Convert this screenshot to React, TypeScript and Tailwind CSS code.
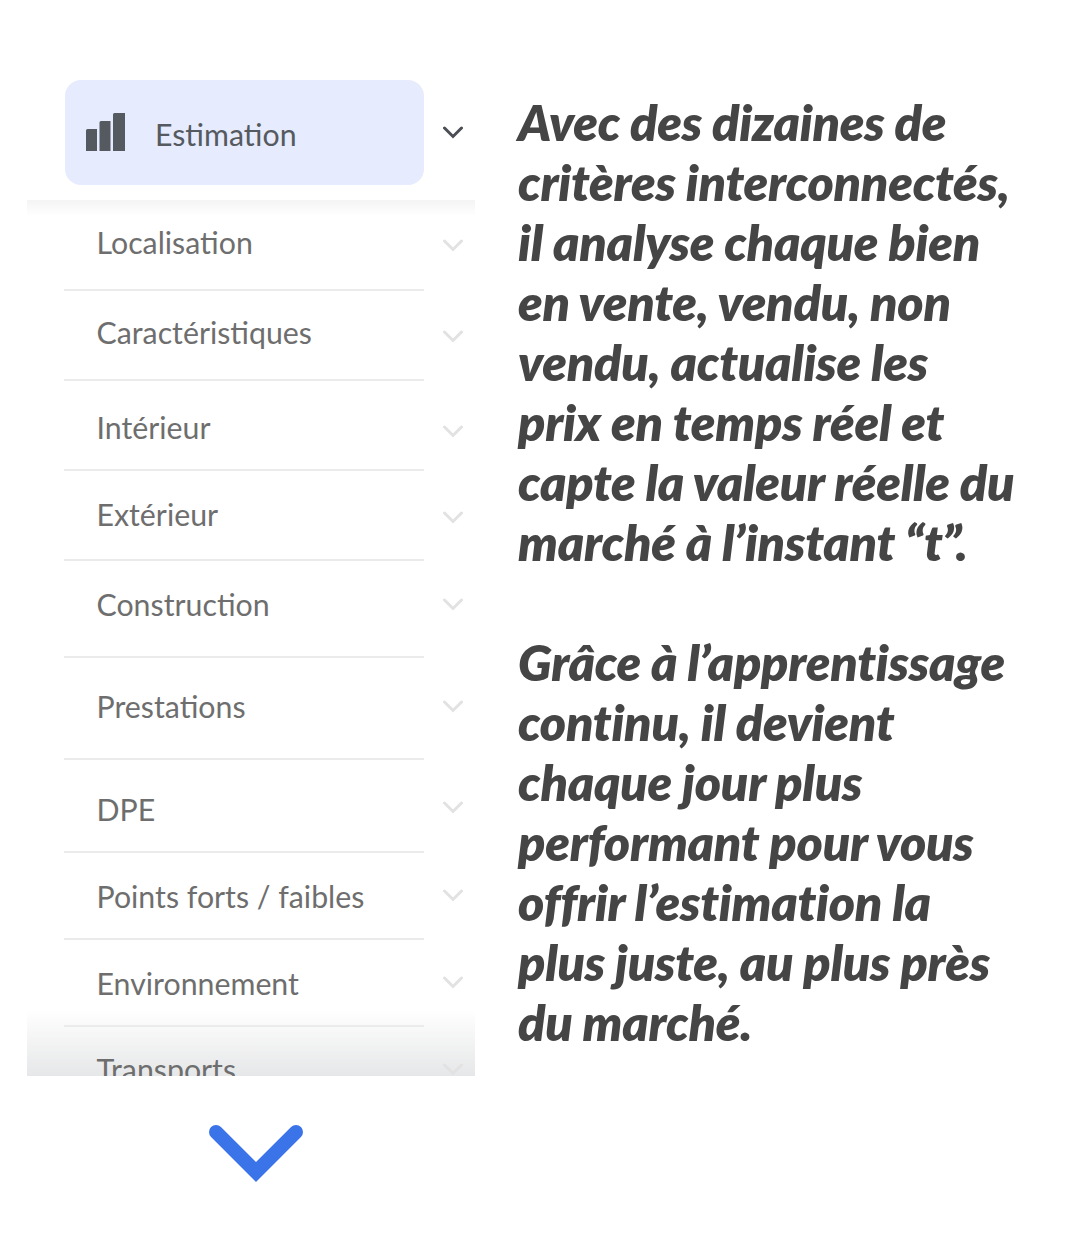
const rows = [
  { label: "Localisation", row: "h-[90px]", text: "pb-1.5", chevron: "pt-0" },
  { label: "Caractéristiques", row: "h-[90px]", text: "pb-1.5", chevron: "pt-0.5" },
  { label: "Intérieur", row: "h-[90px]", text: "pt-1", chevron: "pt-3" },
  { label: "Extérieur", row: "h-[90px]", text: "pb-0.5", chevron: "pt-1" },
  { label: "Construction", row: "h-[97px]", text: "pb-2", chevron: "pb-2" },
  { label: "Prestations", row: "h-[102px]", text: "pb-1", chevron: "pb-1" },
  { label: "DPE", row: "h-[93px]", text: "pt-2", chevron: "pt-1" },
  { label: "Points forts / faibles", row: "h-[87px]", text: "pt-0.5", chevron: "pt-0" },
  { label: "Environnement", row: "h-[87px]", text: "pt-0.5", chevron: "pt-0" },
  { label: "Transports", row: "h-[87px]", text: "pt-0", chevron: "pt-0" },
];

function Chevron({ className }: { className: string }) {
  return (
    <svg width="20" height="13" viewBox="0 0 20 13" fill="none" className={className}>
      <path d="M1.500 2 10 10.500 18.500 2" stroke="currentColor" strokeWidth="3" strokeLinecap="round" strokeLinejoin="miter" />
    </svg>
  );
}

export default function App() {
  return (
    <div className="flex h-[1247px] w-[1083px] overflow-hidden bg-white font-['Lato',sans-serif]">
      {/* Left: accordion of criteria */}
      <div className="w-[518px] shrink-0 pl-[27px] pt-[80px]">
        <div className="flex h-[105px] items-center pl-[38px]">
          <div className="flex h-full w-[359px] items-center rounded-2xl bg-[#e6ebfd] pl-[21px]">
            <svg width="39" height="38" viewBox="0 0 39 38" fill="#555a60" className="mb-[1px]">
              <path d="M0 17.500A1.500 1.500 0 0 1 1.500 16H11v22H0zM13.500 9.500A1.500 1.500 0 0 1 15 8h9.500v30h-11zM27 1.500A1.500 1.500 0 0 1 28.500 0H39v38H27z" />
            </svg>
            <span className="ml-[30px] pt-[3px] text-[30.3px] leading-none text-[#555a60]">Estimation</span>
          </div>
          <Chevron className="ml-[19px] text-[#4b4f55]" />
        </div>

        <div className="relative mt-[15px] h-[876px] w-[448px] overflow-hidden">
          <div className="absolute inset-x-0 top-0 h-[16px] bg-gradient-to-b from-[#f4f4f4] to-white" />
          <div className="absolute inset-x-0 bottom-0 h-[66px] bg-gradient-to-b from-white to-[#e6e7e8]" />
          <div className="relative flex w-[397px] flex-col pl-[37px] pt-[1px]">
            {rows.map((r) => (
              <div key={r.label} className={`flex shrink-0 items-center border-b-2 border-[#ebebeb] ${r.row}`}>
                <span className={`w-[360px] shrink-0 pl-[32.500px] text-[30.3px] leading-none text-[#6e6e6e] ${r.text}`}>
                  {r.label}
                </span>
              </div>
            ))}
          </div>
          <div className="absolute inset-y-0 left-[416px] flex flex-col">
            {rows.map((r) => (
              <div key={r.label} className={`flex shrink-0 items-center ${r.row}`}>
                <div className={r.chevron}>
                  <Chevron className="text-[#e2e2e2]" />
                </div>
              </div>
            ))}
          </div>
        </div>

        <div className="mt-[49px] flex w-[459px] justify-center pr-[1px]">
          <svg width="94" height="58" viewBox="0 0 94 58" fill="none">
            <path d="M7 7 47 47 87 7" stroke="#3b73e8" strokeWidth="14" strokeLinecap="round" strokeLinejoin="miter" />
          </svg>
        </div>
      </div>

      {/* Right: description */}
      <div className="pt-[92px] text-[50px] font-extrabold italic leading-[60px] tracking-[-0.25px] [font-variant-ligatures:none] whitespace-nowrap text-[#454545]">
        <p>
          Avec des dizaines de<br />
          critères interconnectés,<br />
          il analyse chaque bien<br />
          en vente, vendu, non<br />
          vendu, actualise les<br />
          prix en temps réel et<br />
          capte la valeur réelle du<br />
          marché à l’instant “t”.
        </p>
        <p className="mt-[60px]">
          Grâce à l’apprentissage<br />
          continu, il devient<br />
          chaque jour plus<br />
          performant pour vous<br />
          offrir l’estimation la<br />
          plus juste, au plus près<br />
          du marché.
        </p>
      </div>
    </div>
  );
}
